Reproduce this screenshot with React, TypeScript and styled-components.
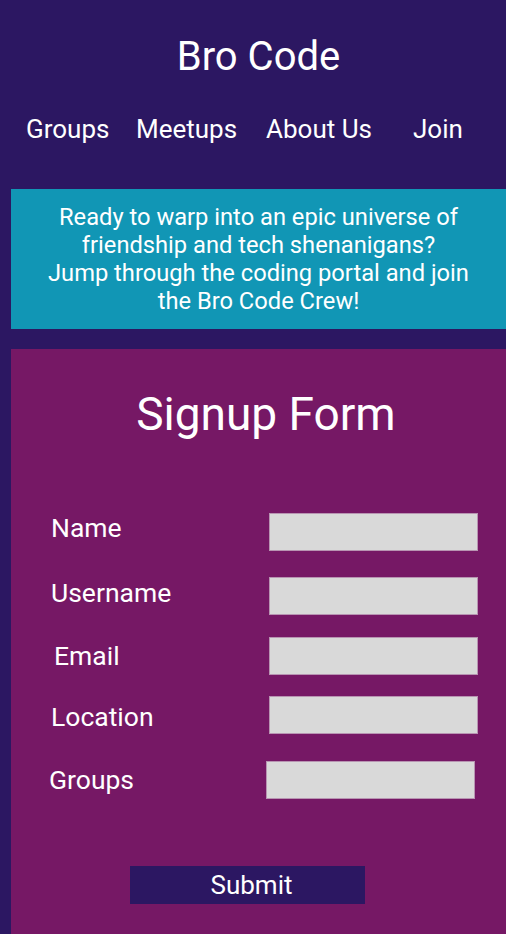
import styled, { createGlobalStyle } from "styled-components";

const colors = {
  page: "#2c1762",
  banner: "#1196b5",
  panel: "#761865",
  field: "#d9d9d9",
  fieldBorder: "#b894b2",
  text: "#ffffff",
};

const GlobalStyle = createGlobalStyle`
  html, body {
    margin: 0;
    padding: 0;
    background: ${colors.page};
  }

  body {
    font-family: Roboto, "Noto Sans", "Liberation Sans", sans-serif;
    color: ${colors.text};
  }

  * {
    box-sizing: border-box;
  }
`;

const Page = styled.div`
  width: 506px;
  min-height: 934px;
  padding-left: 11px;
  overflow: hidden;
`;

const SiteHeader = styled.header`
  padding-top: 33px;
`;

const Title = styled.h1`
  margin: 0;
  text-align: center;
  font-size: 40px;
  font-weight: 400;
  line-height: 47px;
`;

const Nav = styled.nav`
  display: grid;
  grid-template-columns: 110px 130px 147px 1fr;
  margin: 34px 0 0 15px;
  height: 75px;
`;

const NavLink = styled.a`
  font-size: 26px;
  line-height: 30px;
  color: ${colors.text};
  text-decoration: none;
  white-space: nowrap;
`;

const Banner = styled.section`
  background: ${colors.banner};
  padding: 14px 0;
  height: 140px;
  text-align: center;
`;

const BannerText = styled.p`
  margin: 0;
  font-size: 23.7px;
  line-height: 28px;
  white-space: nowrap;
`;

const Panel = styled.main`
  margin-top: 20px;
  background: ${colors.panel};
  padding: 39px 0 60px;
`;

const FormTitle = styled.h2`
  margin: 0 0 0 15px;
  text-align: center;
  font-size: 46px;
  font-weight: 400;
  line-height: 53px;
`;

const Form = styled.form`
  display: flex;
  flex-direction: column;
  margin-top: 72px;
`;

const FieldRow = styled.div<{ $top: number }>`
  display: flex;
  align-items: center;
  height: 37px;
  margin-top: ${({ $top }) => $top}px;
`;

const FieldLabel = styled.label<{ $shift: number; $dy: number }>`
  width: 258px;
  padding-left: ${({ $shift }) => 40 + $shift}px;
  margin-top: ${({ $dy }) => $dy * 2}px;
  font-size: 26.5px;
  line-height: 30px;
  white-space: nowrap;
`;

const FieldInput = styled.input<{ $shift: number }>`
  width: 209px;
  height: 38px;
  margin-left: ${({ $shift }) => $shift}px;
  background: ${colors.field};
  border: 1px solid ${colors.fieldBorder};
  border-radius: 0;
  padding: 0 8px;
  font-family: inherit;
  font-size: 18px;
  outline: none;
`;

const Actions = styled.div`
  display: flex;
  margin-top: 68px;
  padding-left: 119px;
`;

const SubmitButton = styled.button`
  width: 235px;
  height: 38px;
  background: ${colors.page};
  border: none;
  color: ${colors.text};
  font-family: inherit;
  font-size: 26px;
  line-height: 30px;
  padding: 0 0 0 8px;
  cursor: pointer;
`;

const navItems = ["Groups", "Meetups", "About Us", "Join"];

const fields = [
  { id: "name", label: "Name", top: 0, labelShift: 0, inputShift: 0, dy: -4 },
  { id: "username", label: "Username", top: 27, labelShift: 0, inputShift: 0, dy: -3 },
  { id: "email", label: "Email", top: 23, labelShift: 3, inputShift: 0, dy: 0 },
  { id: "location", label: "Location", top: 22, labelShift: 0, inputShift: 0, dy: 2 },
  { id: "groups", label: "Groups", top: 28, labelShift: -2, inputShift: -3, dy: 0 },
];

export default function App() {
  return (
    <>
      <GlobalStyle />
      <Page>
        <SiteHeader>
          <Title>Bro Code</Title>
          <Nav>
            {navItems.map((item) => (
              <NavLink key={item} href="#">
                {item}
              </NavLink>
            ))}
          </Nav>
        </SiteHeader>

        <Banner>
          <BannerText>
            Ready to warp into an epic universe of
            <br />
            friendship and tech shenanigans?
            <br />
            Jump through the coding portal and join
            <br />
            the Bro Code Crew!
          </BannerText>
        </Banner>

        <Panel>
          <FormTitle>Signup Form</FormTitle>
          <Form onSubmit={(event) => event.preventDefault()}>
            {fields.map((field) => (
              <FieldRow key={field.id} $top={field.top}>
                <FieldLabel
                  htmlFor={field.id}
                  $shift={field.labelShift}
                  $dy={field.dy}
                >
                  {field.label}
                </FieldLabel>
                <FieldInput id={field.id} type="text" $shift={field.inputShift} />
              </FieldRow>
            ))}
            <Actions>
              <SubmitButton type="submit">Submit</SubmitButton>
            </Actions>
          </Form>
        </Panel>
      </Page>
    </>
  );
}
